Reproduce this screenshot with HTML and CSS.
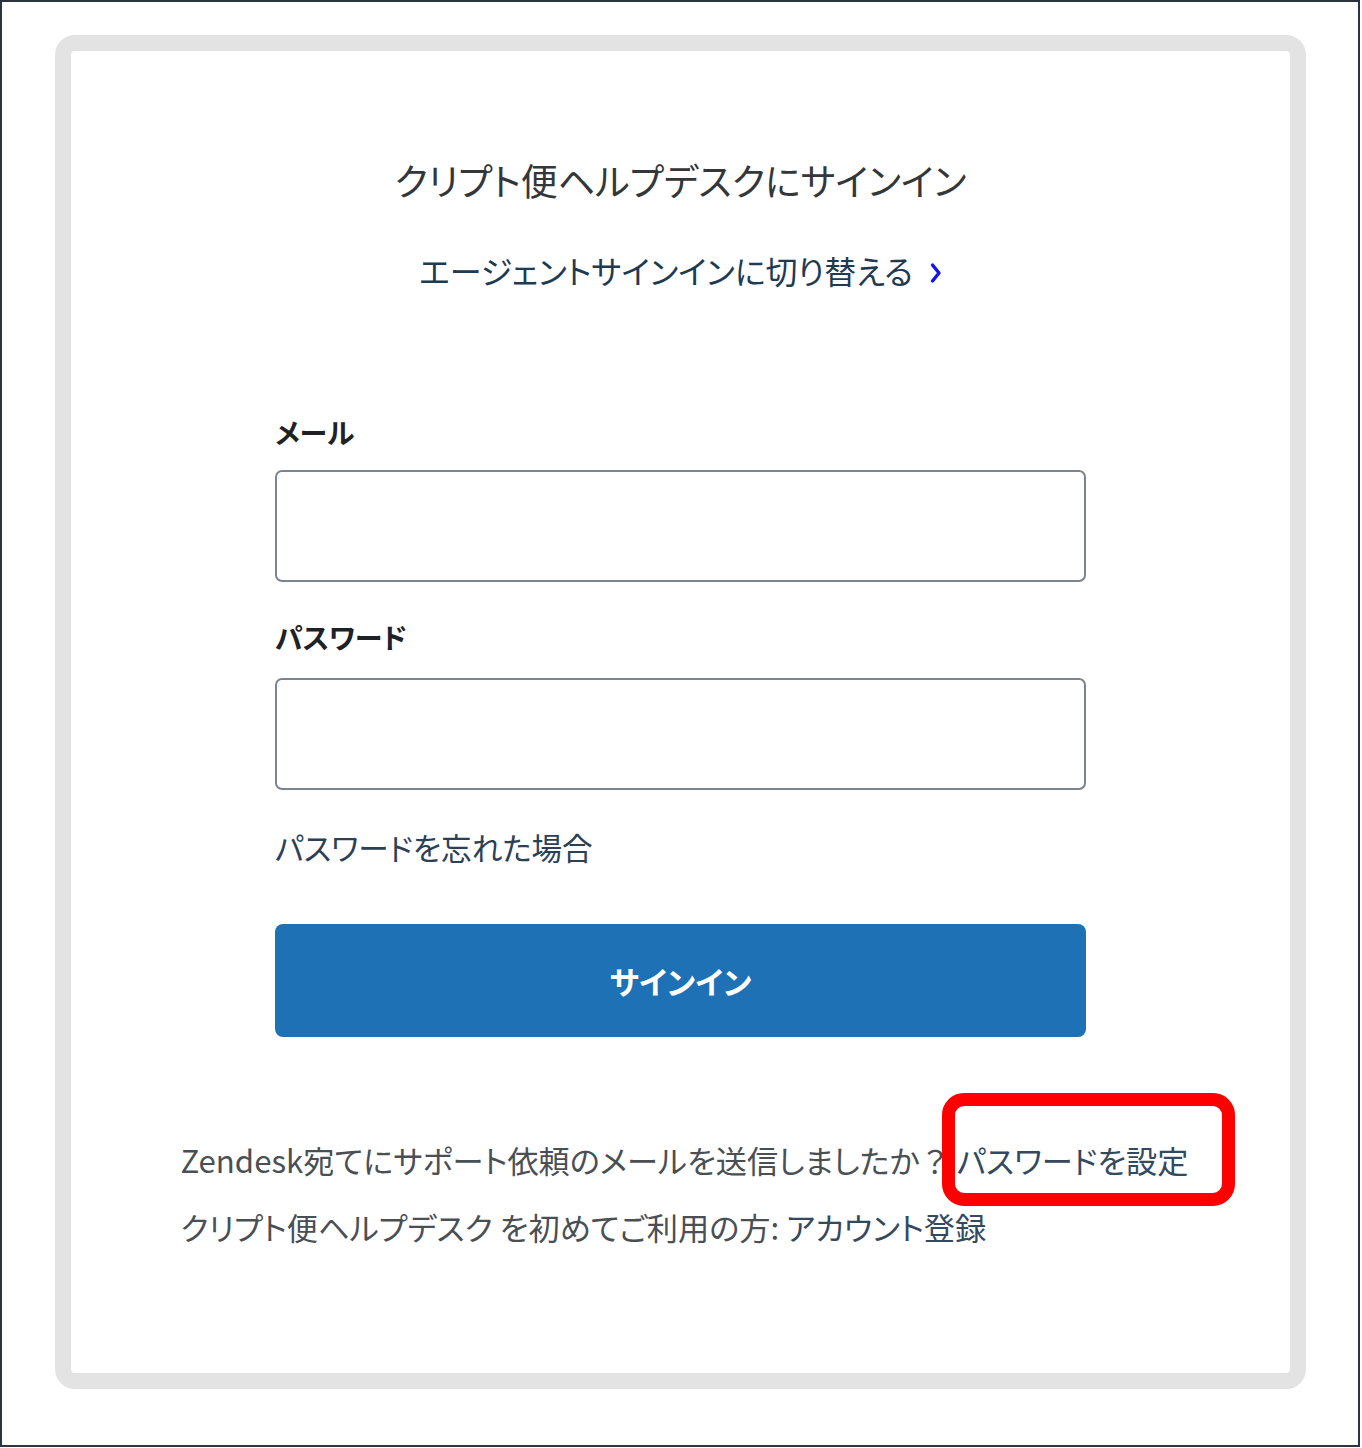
FILE: index.html
```html
<!DOCTYPE html>
<html lang="ja">
<head>
<meta charset="utf-8">
<title>クリプト便ヘルプデスクにサインイン</title>
<link rel="stylesheet" href="styles.css">
</head>
<body>
<div class="frame">
  <div class="card">
    <h1 class="title">クリプト便ヘルプデスクにサインイン</h1>
    <p class="switch">
      <a href="#" class="switch-link">エージェントサインインに切り替える<svg class="chevron" viewBox="0 0 12 22" width="12" height="22" aria-hidden="true"><path d="M2.5 3 L9 11 L2.5 19" fill="none" stroke="#1414f0" stroke-width="3.4" stroke-linecap="round" stroke-linejoin="round"/></svg></a>
    </p>

    <form class="form">
      <label class="label" for="email">メール</label>
      <input class="field" id="email" type="email">

      <label class="label label-second" for="password">パスワード</label>
      <input class="field" id="password" type="password">

      <a href="#" class="forgot">パスワードを忘れた場合</a>

      <button class="submit" type="button">サインイン</button>
    </form>

    <div class="footer">
      <p class="footer-line">Zendesk宛てにサポート依頼のメールを送信しましたか<span class="fullwidth">？</span><a href="#" class="footer-link highlighted">パスワードを設定</a></p>
      <p class="footer-line second">クリプト便ヘルプデスク を初めてご利用の方: <a href="#" class="footer-link">アカウント登録</a></p>
    </div>
  </div>
</div>
</body>
</html>
```

FILE: styles.css
```css
* {
  box-sizing: border-box;
}

html, body {
  margin: 0;
  padding: 0;
  background: #ffffff;
}

body {
  font-family: "Noto Sans CJK JP", "Noto Sans", sans-serif;
  font-feature-settings: "palt";
  color: #2f3337;
}

.frame {
  width: 1360px;
  height: 1447px;
  border: 2px solid #2b353b;
  padding: 33px 0 0 53px;
}

.card {
  position: relative;
  width: 1251px;
  height: 1354px;
  border: 16px solid #e3e3e3;
  border-radius: 20px;
  background: #ffffff;
  padding-top: 104px;
}

.title {
  margin: 0;
  text-align: center;
  font-size: 37px;
  line-height: 50px;
  font-weight: 400;
  color: #33373a;
}

.switch {
  margin: 43px 0 0;
  text-align: center;
  font-size: 32px;
  line-height: 44px;
}

.switch-link {
  color: #203a52;
  text-decoration: none;
}

.chevron {
  display: inline-block;
  vertical-align: middle;
  margin-left: 17px;
  margin-top: -4px;
}

.form {
  width: 811px;
  margin: 120px auto 0;
  display: flex;
  flex-direction: column;
}

.label {
  font-size: 28px;
  line-height: 40px;
  font-weight: 700;
  color: #1e2226;
  margin-bottom: 18px;
}

.label-second {
  margin-top: 35px;
  margin-bottom: 21px;
}

.field {
  display: block;
  width: 100%;
  height: 112px;
  border: 2px solid #7b858e;
  border-radius: 7px;
  background: #ffffff;
  font: inherit;
}

.forgot {
  align-self: flex-start;
  margin-top: 37px;
  font-size: 30.6px;
  line-height: 40px;
  color: #2c4055;
  text-decoration: none;
}

.submit {
  margin-top: 57px;
  height: 113px;
  width: 100%;
  border: none;
  border-radius: 8px;
  background: #1f71b5;
  color: #ffffff;
  font-family: inherit;
  font-feature-settings: "palt";
  font-size: 31px;
  font-weight: 700;
  cursor: pointer;
}

.footer {
  width: 1000px;
  margin: 101px auto 0;
}

.footer-line {
  margin: 0;
  font-size: 31.2px;
  line-height: 44px;
  color: #4a4f54;
  white-space: nowrap;
}

.footer-line.second {
  margin-top: 23px;
}

/* full-width question mark keeps its em box, plus a little air before the link */
.fullwidth {
  font-feature-settings: normal;
  margin-right: 6px;
}

.footer-link {
  color: #34495e;
  text-decoration: none;
}

.highlighted {
  position: relative;
  display: inline-block;
}

/* red callout frame drawn around the link */
.highlighted::after {
  content: "";
  position: absolute;
  left: -15px;
  right: -46px;
  top: -45px;
  bottom: -24px;
  border: 13px solid #ff0000;
  border-radius: 22px;
  pointer-events: none;
}
```
